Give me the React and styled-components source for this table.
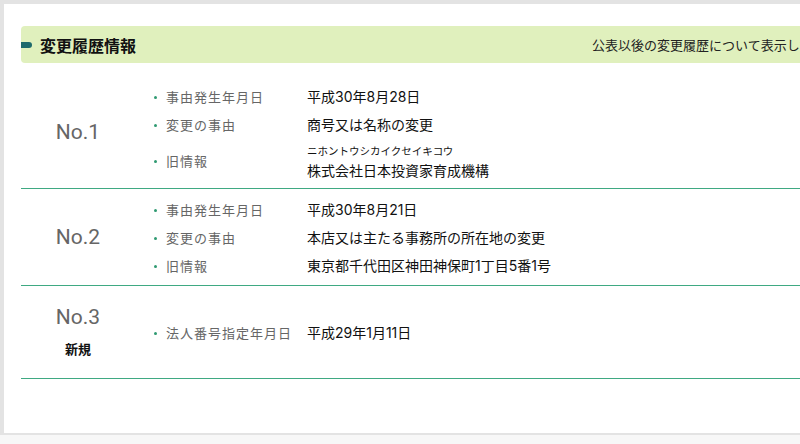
import React from "react";
import styled, { createGlobalStyle } from "styled-components";

const GlobalStyle = createGlobalStyle`
  html, body {
    margin: 0;
    padding: 0;
    background: #f7f7f7;
    overflow: hidden;
  }
  body {
    font-family: "Noto Sans CJK JP", "Noto Sans", sans-serif;
    color: #111;
  }
`;

const Frame = styled.div`
  width: 900px;
  padding: 4px 0 2px 4px;
  background: #e3e3e3;
`;

const Panel = styled.section`
  background: #fff;
  padding: 22px 0 54px 17px;
`;

const Header = styled.header`
  display: flex;
  align-items: center;
  justify-content: space-between;
  height: 37px;
  width: 858px;
  box-sizing: border-box;
  padding: 0 16px 0 0;
  background: #e0f0bd;
  border-radius: 4px 0 0 4px;
`;

const Title = styled.h2`
  display: flex;
  align-items: center;
  gap: 8px;
  margin: 0;
  font-size: 16px;
  font-weight: 700;
  line-height: 1;
  color: #111;

  &::before {
    content: "";
    display: block;
    width: 11px;
    height: 6px;
    background: #1e6a6c;
    border-radius: 0 3px 3px 0;
  }
`;

const Note = styled.p`
  margin: 0;
  font-size: 13px;
  color: #222;
  white-space: nowrap;
`;

const History = styled.div`
  margin-top: 13px;
  width: 866px;
`;

const Entry = styled.div`
  display: flex;
  align-items: stretch;
  border-bottom: 1px solid #3fa982;
`;

const NumberCell = styled.div`
  width: 114px;
  flex: none;
  display: flex;
  flex-direction: column;
  align-items: center;
  justify-content: center;
  padding: 17px 0;
`;

const EntryNo = styled.div`
  font-family: Roboto, "Noto Sans", sans-serif;
  font-size: 21px;
  line-height: 28px;
  height: 28px;
  color: #666;
`;

const Badge = styled.div`
  margin-top: 6px;
  font-size: 13px;
  line-height: 24px;
  height: 24px;
  font-weight: 700;
  color: #111;
`;

const Items = styled.ul`
  list-style: none;
  margin: 0;
  padding: 7px 0 5px 19px;
  display: flex;
  flex-direction: column;
  justify-content: center;
`;

const Item = styled.li`
  display: flex;
  align-items: center;
  min-height: 28px;
`;

const Label = styled.span`
  position: relative;
  width: 153px;
  height: 20px;
  line-height: 20px;
  flex: none;
  box-sizing: border-box;
  padding-left: 12px;
  font-size: 13px;
  letter-spacing: 1px;
  color: #666;
  white-space: nowrap;

  &::before {
    content: "";
    position: absolute;
    left: 0;
    top: 9px;
    width: 3px;
    height: 3px;
    border-radius: 50%;
    background: #2f9a72;
  }
`;

const Value = styled.div`
  font-family: Inter, "Noto Sans CJK JP", sans-serif;
  font-size: 14px;
  color: #111;
  white-space: nowrap;
  line-height: 28px;
  height: ${({ $stacked }) => ($stacked ? "44px" : "28px")};
`;

const Kana = styled.div`
  font-family: "Noto Sans CJK JP", sans-serif;
  font-size: 10.5px;
  line-height: 17px;
  height: 17px;
  padding-top: 3px;
`;

const Name = styled.div`
  line-height: 24px;
  height: 24px;
`;

const entries = [
  {
    no: "No.1",
    items: [
      { label: "事由発生年月日", value: "平成30年8月28日" },
      { label: "変更の事由", value: "商号又は名称の変更" },
      {
        label: "旧情報",
        kana: "ニホントウシカイクセイキコウ",
        value: "株式会社日本投資家育成機構",
      },
    ],
  },
  {
    no: "No.2",
    items: [
      { label: "事由発生年月日", value: "平成30年8月21日" },
      { label: "変更の事由", value: "本店又は主たる事務所の所在地の変更" },
      { label: "旧情報", value: "東京都千代田区神田神保町1丁目5番1号" },
    ],
  },
  {
    no: "No.3",
    badge: "新規",
    items: [{ label: "法人番号指定年月日", value: "平成29年1月11日" }],
  },
];

const App = () => (
  <>
    <GlobalStyle />
    <Frame>
      <Panel>
        <Header>
          <Title>変更履歴情報</Title>
          <Note>公表以後の変更履歴について表示しています。</Note>
        </Header>
        <History>
          {entries.map((entry) => (
            <Entry key={entry.no}>
              <NumberCell>
                <EntryNo>{entry.no}</EntryNo>
                {entry.badge && <Badge>{entry.badge}</Badge>}
              </NumberCell>
              <Items>
                {entry.items.map((item) => (
                  <Item key={item.label}>
                    <Label>{item.label}</Label>
                    {item.kana ? (
                      <Value $stacked>
                        <Kana>{item.kana}</Kana>
                        <Name>{item.value}</Name>
                      </Value>
                    ) : (
                      <Value>{item.value}</Value>
                    )}
                  </Item>
                ))}
              </Items>
            </Entry>
          ))}
        </History>
      </Panel>
    </Frame>
  </>
);

export default App;
